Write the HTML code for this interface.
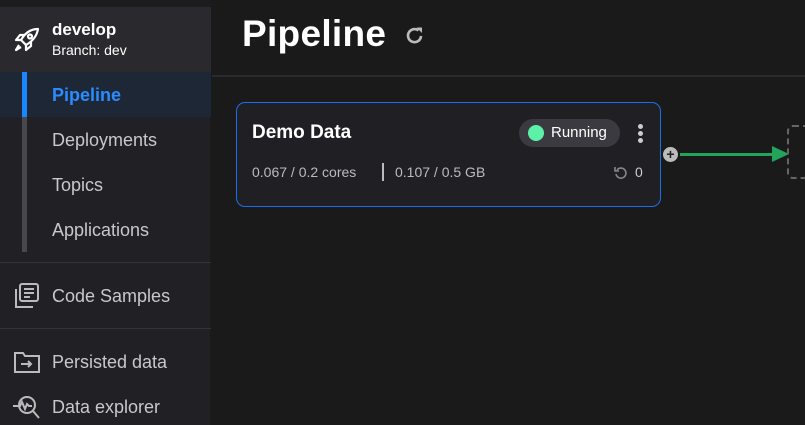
<!DOCTYPE html>
<html><head><style>
*{margin:0;padding:0;box-sizing:border-box}
body{width:805px;height:425px;overflow:hidden;background:#1a1a1a;font-family:"Liberation Sans",sans-serif;position:relative}
.sb{position:absolute;left:0;top:0;width:211px;height:425px;background:#212125;border-right:1px solid #1a1a1a}
.top{position:absolute;left:0;top:0;width:211px;height:7px;background:#1c1c1f}
.hdr{position:absolute;left:0;top:7px;width:211px;height:65px;background:#2a2a2e}
.t{position:absolute;color:#c8c8cc;font-size:18px}
.rail{position:absolute;left:22px;top:72px;width:5px;height:180px;background:#47474c}
.act{position:absolute;left:0;top:72px;width:211px;height:45px;background:#1e2736}
.sep{position:absolute;left:0;width:211px;height:1px;background:#333338}
.main-line{position:absolute;left:212px;top:75px;width:593px;height:2px;background:#2b2b2d}
.card{position:absolute;left:236px;top:102px;width:425px;height:105px;border:1px solid #1a6ff0;border-radius:9px;background:#202024}
</style></head><body>
<div class="sb"></div><div class="top"></div><div class="hdr"></div>
<svg style="position:absolute;left:13px;top:27px" width="28" height="26" viewBox="0 0 28 26" fill="none" stroke="#fff" stroke-width="2.2" stroke-linejoin="round"><path d="M25 2 C18 2 12 6 8 13 L13 18 C20 14 24 8 25 2Z"/><circle cx="17" cy="9.5" r="2"/><path d="M8 13 L3 13 L7 8 L12 8"/><path d="M13 18 L13 23 L18 19 L18 14"/><path d="M6 18 L3 23 L8 20"/></svg>
<div class="t" style="left:52px;top:20px;color:#fff;font-weight:bold;font-size:17px">develop</div>
<div class="t" style="left:52px;top:42px;color:#fff;font-size:14px">Branch: dev</div>
<div class="act"></div><div class="rail"></div>
<div style="position:absolute;left:22px;top:72px;width:5px;height:45px;background:#1a86ff"></div>
<div class="t" style="left:52px;top:85px;color:#2a8cff;font-weight:bold">Pipeline</div>
<div class="t" style="left:52px;top:130px">Deployments</div>
<div class="t" style="left:52px;top:175px">Topics</div>
<div class="t" style="left:52px;top:220px">Applications</div>
<div class="sep" style="top:262px"></div>
<svg style="position:absolute;left:14px;top:283px" width="26" height="26" viewBox="0 0 26 26" fill="none" stroke="#bbb" stroke-width="2"><rect x="6" y="1" width="18" height="17" rx="2"/><path d="M2 6 V24 H19"/><path d="M10 6H20M10 10H20M10 14H16"/></svg>
<div class="t" style="left:52px;top:286px">Code Samples</div>
<div class="sep" style="top:328px"></div>
<svg style="position:absolute;left:14px;top:350px" width="26" height="24" viewBox="0 0 26 24" fill="none" stroke="#bbb" stroke-width="2"><path d="M1 3 H9 L11 6 H25 V22 H1Z"/><path d="M7 14H17M14 11L17 14L14 17"/></svg>
<div class="t" style="left:52px;top:352px">Persisted data</div>
<svg style="position:absolute;left:12px;top:394px" width="28" height="26" viewBox="0 0 28 26" fill="none" stroke="#bbb" stroke-width="2"><circle cx="15" cy="11" r="8"/><path d="M1 12H8L10 8L13 15L15 10L17 12H20"/><path d="M21 17L27 24"/></svg>
<div class="t" style="left:52px;top:397px">Data explorer</div>

<div style="position:absolute;left:242px;top:13px;color:#fff;font-weight:bold;font-size:37px;letter-spacing:0.3px">Pipeline</div>
<svg style="position:absolute;left:404px;top:25px" width="22" height="22" viewBox="0 0 22 22" fill="none" stroke="#bbb" stroke-width="2.6"><path d="M17 11 A6.5 6.5 0 1 1 14.5 5.5"/><path d="M12.5 2.5 L18 2.5 L18 8 Z" fill="#bbb" stroke="none"/></svg>
<div class="main-line"></div>

<div class="card"></div>
<div style="position:absolute;left:252px;top:122px;color:#fff;font-weight:bold;font-size:19px">Demo Data</div>
<div style="position:absolute;left:519px;top:119px;width:101px;height:28px;border-radius:14px;background:#3a3a40"></div>
<div style="position:absolute;left:528px;top:125px;width:16px;height:16px;border-radius:50%;background:#5df0a8"></div>
<div style="position:absolute;left:551px;top:124px;color:#fff;font-size:15px">Running</div>
<div style="position:absolute;left:638px;top:124px;width:5px;height:5px;border-radius:50%;background:#ccc;box-shadow:0 7px 0 #ccc,0 14px 0 #ccc"></div>
<div style="position:absolute;left:252px;top:164px;color:#bbb;font-size:14px">0.067 / 0.2 cores</div>
<div style="position:absolute;left:382px;top:163px;width:2px;height:18px;background:#bbb"></div>
<div style="position:absolute;left:395px;top:164px;color:#bbb;font-size:14px">0.107 / 0.5 GB</div>
<svg style="position:absolute;left:613px;top:165px" width="16" height="16" viewBox="0 0 16 16" fill="none" stroke="#888" stroke-width="1.6"><path d="M4 5 A5 5 0 1 1 3 9"/><path d="M2 2V6H6" /></svg>
<div style="position:absolute;left:635px;top:164px;color:#ccc;font-size:14px">0</div>
<div style="position:absolute;left:663px;top:147px;width:15px;height:15px;border-radius:50%;background:#bbb;color:#222;font-size:14px;line-height:15px;text-align:center;font-weight:bold">+</div>
<div style="position:absolute;left:680px;top:153px;width:95px;height:3px;background:#22a55a"></div>
<div style="position:absolute;left:772px;top:146px;width:0;height:0;border-left:17px solid #22a55a;border-top:8px solid transparent;border-bottom:8px solid transparent"></div>
<div style="position:absolute;left:787px;top:125px;width:40px;height:54px;border:2px dashed #666;border-radius:6px"></div>
</body></html>
